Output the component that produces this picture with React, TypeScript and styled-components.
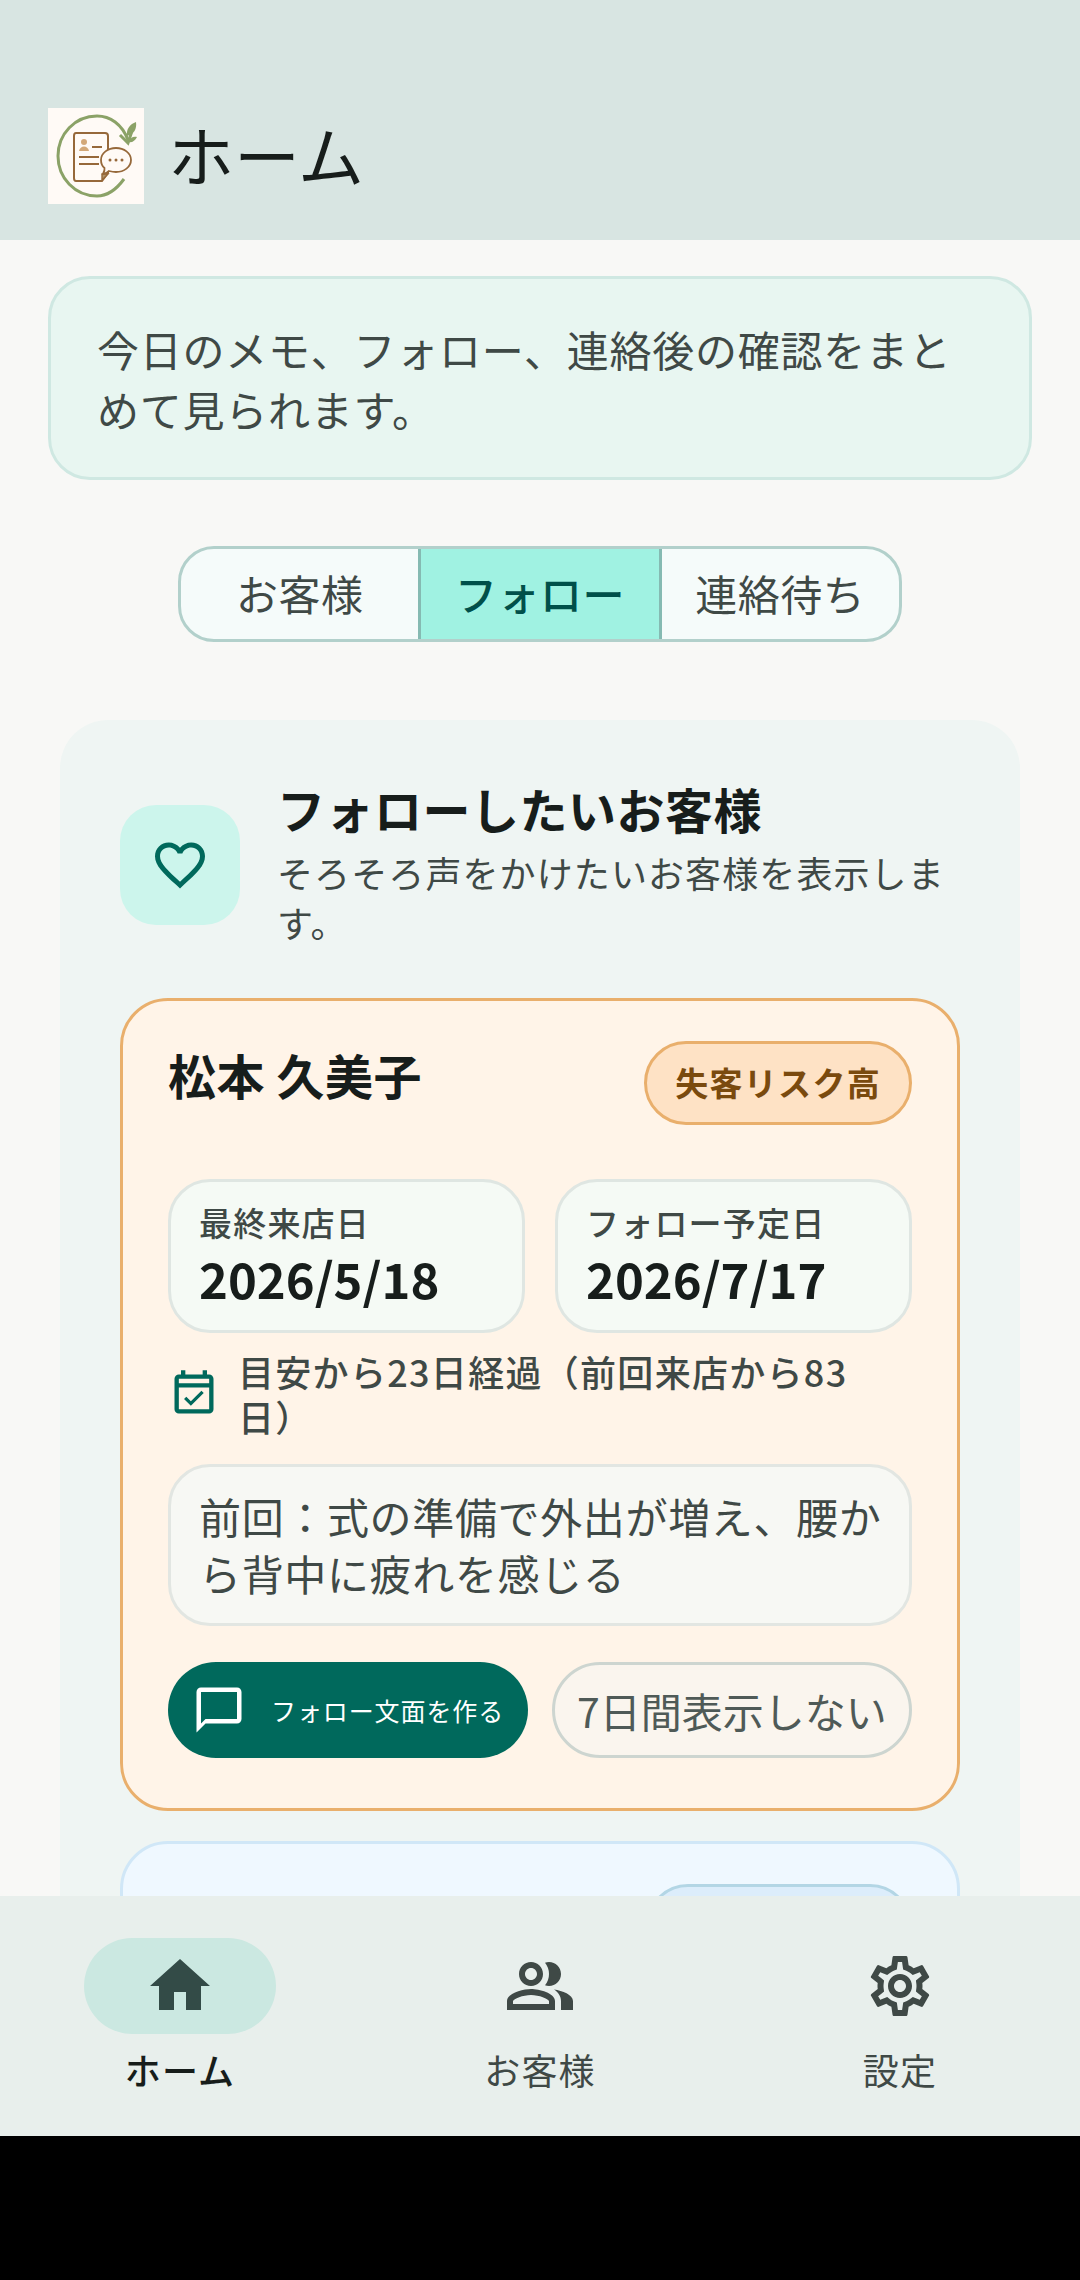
import { createGlobalStyle, styled } from 'styled-components';
import {
  MdChatBubbleOutline,
  MdFavoriteBorder,
  MdHome,
  MdOutlineEventAvailable,
  MdOutlinePeopleAlt,
  MdOutlineSettings,
} from 'react-icons/md';

const GlobalStyle = createGlobalStyle`
  * { box-sizing: border-box; }
  html, body {
    margin: 0;
    background: #000;
    font-family: "Noto Sans CJK JP", "Noto Sans", sans-serif;
  }
`;

const Screen = styled.div`
  width: 1080px;
  height: 2136px;
  display: flex;
  flex-direction: column;
  background: #f8f8f6;
  overflow: hidden;
`;

const Header = styled.header`
  height: 240px;
  flex: none;
  background: #d8e5e2;
  padding: 108px 48px 36px;
  display: flex;
  align-items: center;
  gap: 24px;
`;

const Logo = styled.svg`
  width: 96px;
  height: 96px;
  flex: none;
  background: #fffaf6;
`;

const PageTitle = styled.h1`
  margin: 0 0 6px;
  font-size: 66px;
  font-weight: 400;
  line-height: 90px;
  color: #171d1b;
`;

const Content = styled.main`
  flex: 1;
  min-height: 0;
  overflow: hidden;
  padding: 36px 48px 0;
`;

const Intro = styled.p`
  margin: 0;
  padding: 40px 46px 38px;
  height: 204px;
  background: #e8f6f1;
  border: 3px solid #cfe8e2;
  border-radius: 42px;
  font-size: 42px;
  letter-spacing: 0.75px;
  line-height: 60px;
  color: #3f4946;
`;

const Segments = styled.div`
  margin: 66px auto 78px;
  width: 724px;
  height: 96px;
  display: flex;
  border: 3px solid #b2d0cb;
  border-radius: 36px;
  overflow: hidden;
  background: #f5fbfa;
`;

const Segment = styled.div<{ $active?: boolean }>`
  flex: 1;
  display: flex;
  align-items: center;
  justify-content: center;
  padding-bottom: 3px;
  font-size: 42px;
  letter-spacing: 0.5px;
  font-weight: ${({ $active }) => ($active ? 500 : 400)};
  color: ${({ $active }) => ($active ? '#00504a' : '#3f4946')};
  background: ${({ $active }) => ($active ? '#a0f2e2' : 'transparent')};
  & + & {
    border-left: 3px solid #85bab2;
  }
`;

const Panel = styled.section`
  margin: 0 12px;
  padding: 60px;
  background: #eff5f3;
  border-radius: 48px;
`;

const PanelHead = styled.div`
  min-height: 170px;
  display: flex;
  align-items: center;
  gap: 37px;
  margin-bottom: 48px;
`;

const HeadIcon = styled.div`
  width: 120px;
  height: 120px;
  flex: none;
  border-radius: 36px;
  background: #ccf5ec;
  color: #00695c;
  display: flex;
  align-items: center;
  justify-content: center;
  font-size: 60px;
`;

const HeadText = styled.div`
  min-width: 0;
  align-self: flex-start;
`;

const PanelTitle = styled.h2`
  margin: 0 0 11px;
  font-size: 48px;
  letter-spacing: 0.5px;
  line-height: 56px;
  font-weight: 700;
  color: #171d1b;
`;

const PanelSub = styled.p`
  margin: 0;
  font-size: 36px;
  line-height: 50px;
  letter-spacing: 1.1px;
  color: #3f4946;
`;

const Card = styled.article<{ $tone: 'risk' | 'info' }>`
  padding: 40px 45px 50px;
  border-radius: 48px;
  border: 3px solid ${({ $tone }) => ($tone === 'risk' ? '#e9af6c' : '#d0e7f7')};
  background: ${({ $tone }) => ($tone === 'risk' ? '#fff4e8' : '#eff8ff')};
  & + & {
    margin-top: 30px;
  }
`;

const CardTop = styled.div`
  display: flex;
  justify-content: space-between;
  align-items: flex-start;
  margin-bottom: 54px;
`;

const Name = styled.h3`
  margin: 0;
  font-size: 48px;
  letter-spacing: 0.5px;
  line-height: 66px;
  font-weight: 700;
  color: #171d1b;
`;

const Chip = styled.span<{ $tone: 'risk' | 'info' }>`
  height: 84px;
  min-width: 266px;
  padding: 0 28px 3px;
  display: flex;
  align-items: center;
  justify-content: center;
  border-radius: 42px;
  border: 3px solid ${({ $tone }) => ($tone === 'risk' ? '#e9af6c' : '#b3d6e5')};
  background: ${({ $tone }) => ($tone === 'risk' ? '#fee2c5' : '#dcedfb')};
  color: #7a4a0e;
  font-size: 33px;
  font-weight: 700;
  letter-spacing: 1.3px;
`;

const Dates = styled.div`
  display: grid;
  grid-template-columns: 1fr 1fr;
  gap: 30px;
`;

const DateBox = styled.div`
  height: 154px;
  padding: 17px 28px;
  background: #f5faf5;
  border: 3px solid #dfe6e2;
  border-radius: 42px;
`;

const DateLabel = styled.div`
  font-size: 33px;
  letter-spacing: 1.2px;
  line-height: 46px;
  font-weight: 500;
  color: #3f4946;
`;

const DateValue = styled.div`
  font-size: 49px;
  line-height: 66px;
  font-weight: 700;
  color: #171d1b;
`;

const Elapsed = styled.div`
  margin: 16px 0 25px;
  display: flex;
  align-items: center;
  gap: 18px;
  color: #00695c;
  font-size: 52px;
`;

const ElapsedIcon = styled(MdOutlineEventAvailable)`
  flex: none;
`;

const ElapsedText = styled.span`
  padding-right: 24px;
  font-size: 36px;
  line-height: 45px;
  font-weight: 500;
  letter-spacing: 1.3px;
  color: #3f4946;
`;

const Note = styled.p`
  margin: 0 0 36px;
  padding: 20px 24px 22px 28px;
  background: #f7f8f4;
  border: 3px solid #e2e6e2;
  border-radius: 42px;
  font-size: 42px;
  letter-spacing: 0.65px;
  line-height: 57px;
  color: #3f4946;
`;

const Actions = styled.div`
  display: flex;
  gap: 24px;
`;

const PrimaryButton = styled.button`
  width: 360px;
  height: 96px;
  border: 0;
  padding: 0 24px;
  border-radius: 48px;
  background: #00695c;
  color: #fff;
  display: flex;
  align-items: center;
  gap: 25px;
  font-family: inherit;
  font-size: 25px;
  letter-spacing: 0.9px;
  font-weight: 400;
  white-space: nowrap;
  svg {
    flex: none;
    font-size: 54px;
  }
`;

const GhostButton = styled.button`
  width: 360px;
  height: 96px;
  border: 3px solid #cdd5d0;
  padding: 0;
  border-radius: 48px;
  background: #faf5ee;
  color: #4f5a57;
  font-family: inherit;
  font-size: 41px;
  white-space: nowrap;
`;

const BottomNav = styled.nav`
  height: 240px;
  flex: none;
  background: #e8efec;
  display: grid;
  grid-template-columns: repeat(3, 1fr);
  padding: 42px 0 0;
  position: relative;
`;

const NavItem = styled.div`
  display: flex;
  flex-direction: column;
  align-items: center;
  gap: 10px;
`;

const NavPill = styled.div<{ $active?: boolean }>`
  width: 192px;
  height: 96px;
  border-radius: 48px;
  display: flex;
  align-items: center;
  justify-content: center;
  background: ${({ $active }) => ($active ? '#cbe8e1' : 'transparent')};
  color: ${({ $active }) => ($active ? '#334b47' : '#3f4946')};
  font-size: 72px;
`;

const NavLabel = styled.span<{ $active?: boolean }>`
  font-size: 36px;
  letter-spacing: 1.2px;
  line-height: 50px;
  font-weight: ${({ $active }) => ($active ? 500 : 400)};
  color: ${({ $active }) => ($active ? '#171d1b' : '#3f4946')};
`;

const AppLogo = () => (
  <Logo viewBox="0 0 96 96">
    <path d="M76 71 C68 82 58 88 49 88 C27 88 10 70 10 48 C10 26 27 8 49 8 C62 8 74 16 80 32" fill="none" stroke="#8ba267" strokeWidth="3" />
    <path d="M72 27 L80 35 L84 23" fill="none" stroke="#8ba267" strokeWidth="3" />
    <path d="M79 28 C78 21 82 16 88 14 C89 21 86 26 79 28Z" fill="#8ba267" />
    <path d="M80 34 C82 30 85 28 89 29 C87 33 84 35 80 34Z" fill="#8ba267" />
    <path d="M28 25 H57 Q60 25 60 28 V65 L54 73 H28 Q26 73 26 70 V28 Q26 25 28 25Z" fill="#fffaf6" stroke="#96683a" strokeWidth="2" />
    <circle cx="36" cy="34" r="3" fill="#d3a878" />
    <path d="M31 43 C32 37 40 37 41 43Z" fill="#d3a878" />
    <path d="M44 39 H54 M31 49 H51 M31 56 H51" stroke="#96683a" strokeWidth="2" fill="none" />
    <path d="M54 72 V66 H60Z" fill="#b2946a" stroke="#96683a" strokeWidth="1.4" />
    <path d="M68 40 C76 40 83 45 83 52 C83 59 76 64 68 64 C65 64 63 63.5 61 63 C59 65 57 66 55 66 C56 64 57 62 56.5 60 C54 58 53 55 53 52 C53 45 60 40 68 40Z" fill="#fffaf6" stroke="#96683a" strokeWidth="1.8" />
    <circle cx="62" cy="52" r="1.5" fill="#96683a" />
    <circle cx="68" cy="52" r="1.5" fill="#96683a" />
    <circle cx="74" cy="52" r="1.5" fill="#96683a" />
  </Logo>
);

const App = () => {
  return (
    <Screen>
      <GlobalStyle />
      <Header>
        <AppLogo />
        <PageTitle>ホーム</PageTitle>
      </Header>

      <Content>
        <Intro>今日のメモ、フォロー、連絡後の確認をまとめて見られます。</Intro>

        <Segments>
          <Segment>お客様</Segment>
          <Segment $active>フォロー</Segment>
          <Segment>連絡待ち</Segment>
        </Segments>

        <Panel>
          <PanelHead>
            <HeadIcon>
              <MdFavoriteBorder />
            </HeadIcon>
            <HeadText>
              <PanelTitle>フォローしたいお客様</PanelTitle>
              <PanelSub>そろそろ声をかけたいお客様を表示します。</PanelSub>
            </HeadText>
          </PanelHead>

          <Card $tone="risk">
            <CardTop>
              <Name>松本 久美子</Name>
              <Chip $tone="risk">失客リスク高</Chip>
            </CardTop>
            <Dates>
              <DateBox>
                <DateLabel>最終来店日</DateLabel>
                <DateValue>2026/5/18</DateValue>
              </DateBox>
              <DateBox>
                <DateLabel>フォロー予定日</DateLabel>
                <DateValue>2026/7/17</DateValue>
              </DateBox>
            </Dates>
            <Elapsed>
              <ElapsedIcon />
              <ElapsedText>目安から23日経過（前回来店から83日）</ElapsedText>
            </Elapsed>
            <Note>前回：式の準備で外出が増え、腰から背中に疲れを感じる</Note>
            <Actions>
              <PrimaryButton>
                <MdChatBubbleOutline />
                フォロー文面を作る
              </PrimaryButton>
              <GhostButton>7日間表示しない</GhostButton>
            </Actions>
          </Card>

          <Card $tone="info">
            <CardTop>
              <Name />
              <Chip $tone="info" />
            </CardTop>
          </Card>
        </Panel>
      </Content>

      <BottomNav>
        <NavItem>
          <NavPill $active>
            <MdHome />
          </NavPill>
          <NavLabel $active>ホーム</NavLabel>
        </NavItem>
        <NavItem>
          <NavPill>
            <MdOutlinePeopleAlt />
          </NavPill>
          <NavLabel>お客様</NavLabel>
        </NavItem>
        <NavItem>
          <NavPill>
            <MdOutlineSettings />
          </NavPill>
          <NavLabel>設定</NavLabel>
        </NavItem>
      </BottomNav>
    </Screen>
  );
};

export default App;
